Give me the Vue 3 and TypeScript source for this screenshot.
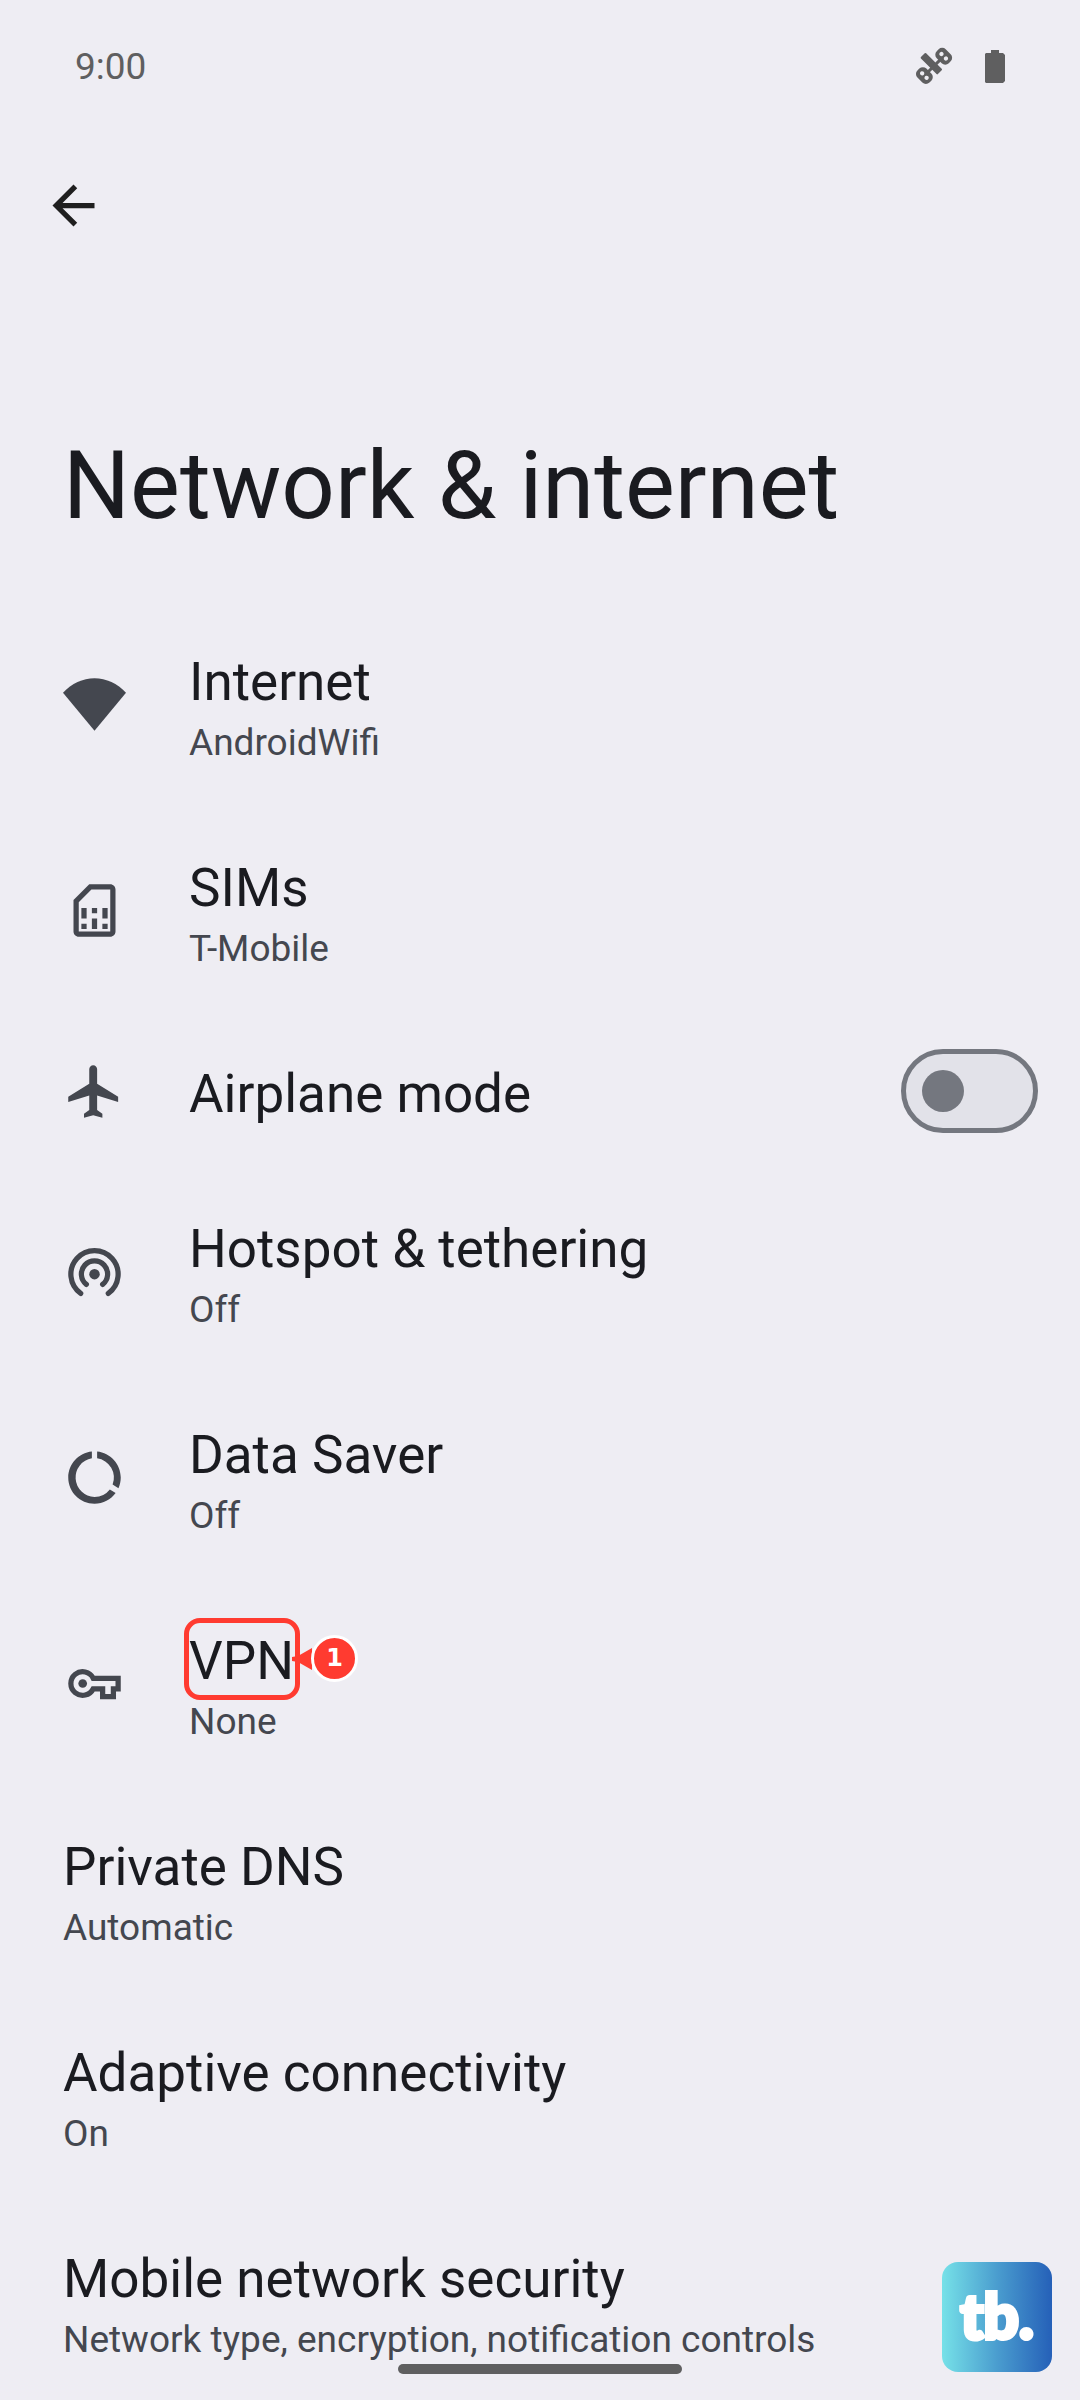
<script setup lang="ts">
import { ref } from 'vue'

type IconName = 'wifi' | 'sim' | 'airplane' | 'hotspot' | 'data' | 'key'

interface Setting {
  id: string
  title: string
  summary?: string
  icon?: IconName
  toggle?: boolean
  step?: number
}

const airplaneMode = ref(false)

const settings: Setting[] = [
  { id: 'internet', title: 'Internet', summary: 'AndroidWifi', icon: 'wifi' },
  { id: 'sims', title: 'SIMs', summary: 'T-Mobile', icon: 'sim' },
  { id: 'airplane', title: 'Airplane mode', icon: 'airplane', toggle: true },
  { id: 'hotspot', title: 'Hotspot & tethering', summary: 'Off', icon: 'hotspot' },
  { id: 'data-saver', title: 'Data Saver', summary: 'Off', icon: 'data' },
  { id: 'vpn', title: 'VPN', summary: 'None', icon: 'key', step: 1 },
  { id: 'dns', title: 'Private DNS', summary: 'Automatic' },
  { id: 'adaptive', title: 'Adaptive connectivity', summary: 'On' },
  {
    id: 'security',
    title: 'Mobile network security',
    summary: 'Network type, encryption, notification controls',
  },
]
</script>

<template>
  <div class="screen">
    <div class="status-bar">
      <time class="clock">9:00</time>
      <div class="status-icons">
        <svg class="satellite" viewBox="99 72 126 126" aria-hidden="true">
          <g transform="translate(154 128) rotate(45)">
            <rect x="-36" y="-11" width="72" height="22" rx="3" />
            <rect x="6" y="-30" width="9" height="60" />
            <path
              fill-rule="evenodd"
              d="M0-61H21A15 15 0 0 1 36-46V-38A15 15 0 0 1 21-23H0A15 15 0 0 1-15-38V-46A15 15 0 0 1 0-61ZM1-48.500a6.500 6.500 0 1 0 .01 0ZM20-48.500a6.500 6.500 0 1 0 .01 0Z"
            />
            <path
              fill-rule="evenodd"
              d="M0 21H21A15 15 0 0 1 36 36V44A15 15 0 0 1 21 59H0A15 15 0 0 1-15 44V36A15 15 0 0 1 0 21ZM1 33.500a6.500 6.500 0 1 0 .01 0ZM20 33.500a6.500 6.500 0 1 0 .01 0Z"
            />
          </g>
        </svg>
        <svg class="battery" viewBox="0 0 20 33" aria-hidden="true">
          <path d="M6 0H14V3H18L20 5V31L18 33H1L0 32V4L1 3H6Z" />
        </svg>
      </div>
    </div>

    <header>
      <nav class="toolbar">
        <button class="back" type="button" aria-label="Navigate up">
          <svg viewBox="0 0 24 24" aria-hidden="true">
            <path d="M20 11H7.830l5.590-5.590L12 4l-8 8 8 8 1.410-1.410L7.830 13H20z" />
          </svg>
        </button>
      </nav>
      <h1>Network &amp; internet</h1>
    </header>

    <main>
      <ul class="settings">
        <li v-for="item in settings" :key="item.id">
          <component
            :is="item.toggle ? 'label' : 'a'"
            class="row"
            :href="item.toggle ? undefined : '#' + item.id"
            :for="item.toggle ? item.id : undefined"
          >
            <span v-if="item.icon" class="icon">
              <svg viewBox="0 0 24 24" aria-hidden="true">
                <path v-if="item.icon === 'wifi'" d="M12 22L0 7.500C3.300 4 7.500 2 12 2s8.700 2 12 5.500z" />
                <template v-else-if="item.icon === 'sim'">
                  <path
                    fill-rule="evenodd"
                    d="M18 2h-8L4 8v12c0 1.100.9 2 2 2h12c1.100 0 2-.9 2-2V4c0-1.100-.9-2-2-2zM18 20H6V8.830L10.830 4H18z"
                  />
                  <path d="M7 11h2v4H7zM7 17h2v2H7zM11 11h2v2h-2zM11 15h2v4h-2zM15 11h2v4h-2zM15 17h2v2h-2z" />
                </template>
                <path
                  v-else-if="item.icon === 'airplane'"
                  d="M21 16v-2l-8-5V3.500C13 2.670 12.330 2 11.500 2S10 2.670 10 3.500V9l-8 5v2l8-2.500V19l-2 1.500V22l3.500-1 3.500 1v-1.500L13 19v-5.500l8 2.500z"
                />
                <template v-else-if="item.icon === 'hotspot'">
                  <circle cx="12" cy="13" r="2" />
                  <path class="stroke" d="M8.900 16.900A5 5 0 1 1 15.100 16.900M6.750 20.350A9 9 0 1 1 17.250 20.350" />
                </template>
                <path
                  v-else-if="item.icon === 'data'"
                  d="M12 19.400a7.400 7.400 0 0 1-1-14.700V2.050C5.940 2.550 2 6.810 2 12c0 5.520 4.470 10 9.990 10 3.310 0 6.240-1.610 8.060-4.090l-2.200-1.340A7.400 7.400 0 0 1 12 19.400zM13 2.050V4.700A7.400 7.400 0 0 1 18.900 14.700l2.220 1.370C21.680 14.830 22 13.450 22 12c0-5.180-3.950-9.450-9-9.950z"
                />
                <template v-else>
                  <circle cx="7.500" cy="12" r="1.650" />
                  <path class="stroke square" d="M11.530 10H21V14H19.200V17H15.100V14H11.530A4.500 4.500 0 1 1 11.530 10Z" />
                </template>
              </svg>
            </span>

            <span class="text">
              <span class="title">
                {{ item.title }}
                <span v-if="item.step" class="highlight">
                  <svg class="pointer" viewBox="0 0 20 22" aria-hidden="true">
                    <path d="M0 9L6 8L20 0V22L6 14L0 13Z" />
                  </svg>
                  <span class="step">{{ item.step }}</span>
                </span>
              </span>
              <span v-if="item.summary" class="summary">{{ item.summary }}</span>
            </span>

            <input
              v-if="item.toggle"
              :id="item.id"
              v-model="airplaneMode"
              class="switch"
              type="checkbox"
              role="switch"
            />
          </component>
        </li>
      </ul>
    </main>

    <div class="logo">tb.</div>
    <div class="gesture-bar"></div>
  </div>
</template>

<style>
body {
  margin: 0;
  background: #eeedf3;
}
</style>

<style scoped>
.screen {
  min-height: 100vh;
  background: #eeedf3;
  color: #1a1b20;
  font-family: Roboto, "Noto Sans", sans-serif;
}

svg {
  display: block;
  fill: currentColor;
}

.status-bar {
  display: flex;
  align-items: center;
  justify-content: space-between;
  height: 132px;
  padding: 0 75px;
  color: #5f5f60;
}

.clock {
  font-size: 37px;
  line-height: 43px;
}

.status-icons {
  display: flex;
  align-items: center;
  gap: 30px;
}

.satellite {
  width: 42px;
  height: 42px;
}

.battery {
  width: 20px;
  height: 33px;
}

.toolbar {
  display: flex;
  align-items: center;
  height: 147px;
  padding: 0 42px;
}

.back {
  width: 63px;
  height: 63px;
  padding: 0;
  border: 0;
  background: none;
  color: #1f1f1f;
}

h1 {
  margin: 152px 63px 65px;
  font-size: 94px;
  font-weight: 400;
  line-height: 110px;
}

.settings {
  margin: 0;
  padding: 0;
  list-style: none;
}

.row {
  display: flex;
  align-items: center;
  padding: 39px 42px 48px 63px;
  color: inherit;
  text-decoration: none;
}

li:last-child .row {
  padding-bottom: 36px;
}

.icon {
  width: 63px;
  margin-right: 63px;
  color: #44474f;
}

.stroke {
  fill: none;
  stroke: currentColor;
  stroke-width: 2;
  stroke-linecap: round;
}

.stroke.square {
  stroke-linecap: butt;
}

.text {
  display: flex;
  flex: 1;
  flex-direction: column;
  align-items: flex-start;
  padding-top: 6px;
}

.title {
  position: relative;
  font-size: 53px;
  line-height: 62px;
}

.summary {
  padding-top: 8px;
  color: #44474f;
  font-size: 37px;
  line-height: 43px;
}

/* The switch is taller than a line of text, so it reaches into the row's padding. */
.switch {
  display: flex;
  align-items: center;
  box-sizing: border-box;
  width: 137px;
  height: 84px;
  margin: -8px 0;
  padding: 0 16px;
  border: 5px solid #74777f;
  border-radius: 42px;
  appearance: none;
  background: #e2e2e9;
}

.switch::before {
  width: 42px;
  height: 42px;
  border-radius: 50%;
  background: #74777f;
  content: "";
}

.switch:checked {
  justify-content: flex-end;
}

.highlight {
  position: absolute;
  inset: -12px -6px -8px -5px;
  border: 5px solid #ff3b30;
  border-radius: 16px;
  color: #ff3b30;
}

.pointer {
  position: absolute;
  top: 25px;
  left: 100%;
  width: 20px;
  height: 22px;
  margin-left: -3px;
}

.step {
  position: absolute;
  top: 12px;
  left: 100%;
  box-sizing: border-box;
  width: 47px;
  height: 47px;
  margin-left: 16px;
  border: 3px solid #fff;
  border-radius: 50%;
  background: #ff3b30;
  color: #fff;
  font: bold 24px/41px "DejaVu Sans", sans-serif;
  text-align: center;
}

.logo {
  position: fixed;
  right: 28px;
  bottom: 28px;
  width: 110px;
  height: 110px;
  border-radius: 16px;
  background: linear-gradient(90deg, #76e1e8, #4a9dcf 50%, #2560b8);
  color: #fff;
  font: 900 62px/106px Lato, sans-serif;
  text-align: center;
  -webkit-text-stroke: 4px #fff;
}

.gesture-bar {
  position: fixed;
  bottom: 26px;
  left: 50%;
  width: 284px;
  height: 10px;
  border-radius: 5px;
  background: #5f5f60;
  transform: translateX(-50%);
}
</style>
